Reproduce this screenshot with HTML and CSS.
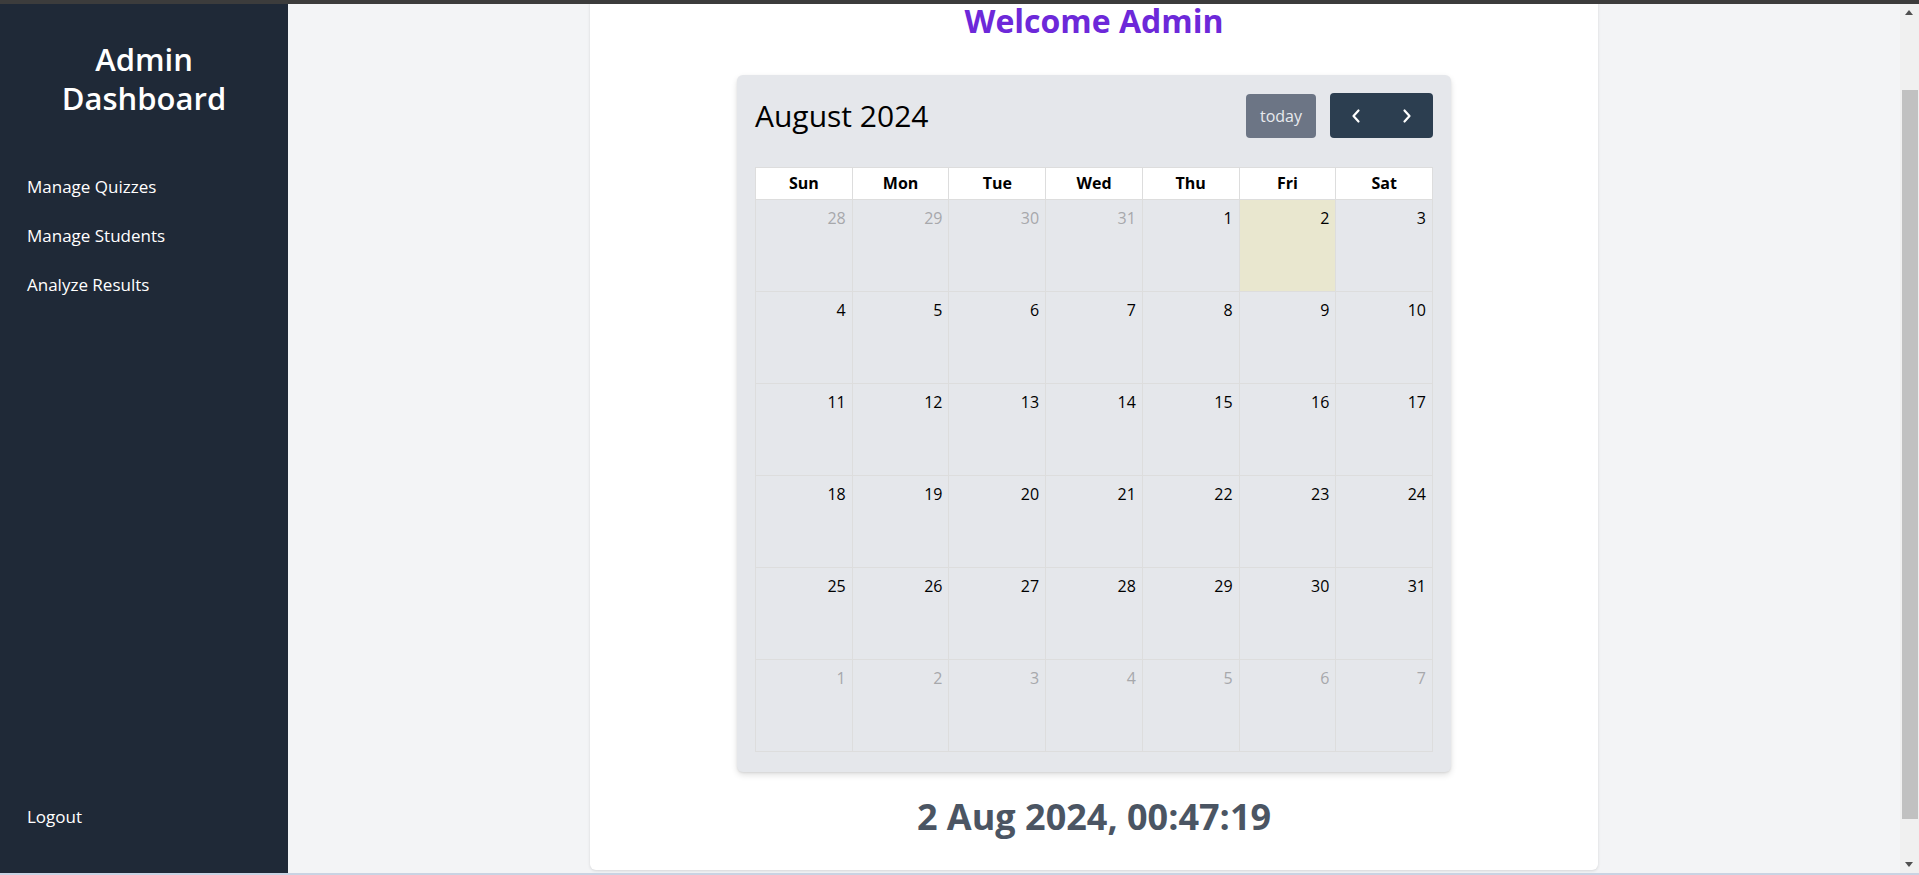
FILE: index.html
```html
<!DOCTYPE html>
<html lang="en">
<head>
<meta charset="utf-8">
<title>Admin Dashboard</title>
<link rel="stylesheet" href="styles.css">
</head>
<body>
<div class="frame-top"></div>
<div class="app">
  <aside class="sidebar">
    <h1 class="brand">Admin Dashboard</h1>
    <nav class="nav">
      <a class="nav-link" href="#">Manage Quizzes</a>
      <a class="nav-link" href="#">Manage Students</a>
      <a class="nav-link" href="#">Analyze Results</a>
    </nav>
    <a class="nav-link logout" href="#">Logout</a>
  </aside>
  <main class="main">
    <section class="card">
      <h2 class="welcome">Welcome Admin</h2>
      <div class="calendar">
        <div class="toolbar">
          <h3 class="cal-title">August 2024</h3>
          <div class="tools">
            <button class="btn btn-today">today</button>
            <div class="btn-group">
              <button class="btn btn-nav" aria-label="prev"><svg width="12" height="16" viewBox="0 0 12 16"><path d="M8.5 2.5 3.5 8l5 5.5" fill="none" stroke="#fff" stroke-width="2.2" stroke-linecap="round" stroke-linejoin="round"/></svg></button>
              <button class="btn btn-nav" aria-label="next"><svg width="12" height="16" viewBox="0 0 12 16"><path d="M3.5 2.5 8.5 8l-5 5.5" fill="none" stroke="#fff" stroke-width="2.2" stroke-linecap="round" stroke-linejoin="round"/></svg></button>
            </div>
          </div>
        </div>
        <div class="grid">
          <div class="dow">Sun</div><div class="dow">Mon</div><div class="dow">Tue</div><div class="dow">Wed</div><div class="dow">Thu</div><div class="dow">Fri</div><div class="dow">Sat</div>
          <div class="day other">28</div><div class="day other">29</div><div class="day other">30</div><div class="day other">31</div><div class="day">1</div><div class="day today">2</div><div class="day">3</div>
          <div class="day">4</div><div class="day">5</div><div class="day">6</div><div class="day">7</div><div class="day">8</div><div class="day">9</div><div class="day">10</div>
          <div class="day">11</div><div class="day">12</div><div class="day">13</div><div class="day">14</div><div class="day">15</div><div class="day">16</div><div class="day">17</div>
          <div class="day">18</div><div class="day">19</div><div class="day">20</div><div class="day">21</div><div class="day">22</div><div class="day">23</div><div class="day">24</div>
          <div class="day">25</div><div class="day">26</div><div class="day">27</div><div class="day">28</div><div class="day">29</div><div class="day">30</div><div class="day">31</div>
          <div class="day other">1</div><div class="day other">2</div><div class="day other">3</div><div class="day other">4</div><div class="day other">5</div><div class="day other">6</div><div class="day other">7</div>
        </div>
      </div>
      <p class="clock">2 Aug 2024, 00:47:19</p>
    </section>
  </main>
  <div class="scrollbar">
    <div class="sb-arrow sb-up"></div>
    <div class="sb-track"><div class="sb-thumb"></div></div>
    <div class="sb-arrow sb-down"></div>
  </div>
</div>
<div class="frame-bottom"></div>
</body>
</html>
```

FILE: styles.css
```css
* { box-sizing: border-box; }
html, body { margin: 0; padding: 0; }
body {
  width: 1919px;
  height: 875px;
  overflow: hidden;
  font-family: "Open Sans", "Noto Sans", sans-serif;
  background: #f3f4f6;
  display: flex;
  flex-direction: column;
}
.frame-top { height: 4px; background: #3c3c3c; flex: none; }
.frame-bottom { height: 2px; background: #c9d3e3; flex: none; }
.app { flex: 1; display: flex; min-height: 0; }

.sidebar {
  width: 288px;
  flex: none;
  background: #1f2937;
  color: #fff;
  display: flex;
  flex-direction: column;
  padding: 36px 0 32px;
}
.brand {
  margin: 0 0 44px;
  padding: 0 40px;
  font-size: 31px;
  line-height: 39px;
  font-weight: 600;
  text-align: center;
}
.nav { display: flex; flex-direction: column; }
.nav-link {
  display: block;
  color: #fff;
  text-decoration: none;
  font-size: 17px;
  line-height: 25px;
  padding: 12px 27px;
}
.logout { margin-top: auto; }

.main {
  flex: 1;
  min-width: 0;
  display: flex;
  flex-direction: column;
  justify-content: flex-end;
  align-items: center;
  overflow: hidden;
  padding-bottom: 3px;
}
.card {
  width: 1008px;
  flex: none;
  background: #fff;
  border-radius: 6px;
  box-shadow: 0 1px 3px rgba(0,0,0,.12);
  padding: 20px 0 33px;
  display: flex;
  flex-direction: column;
  align-items: center;
}
.welcome {
  margin: 0 0 34px;
  font-size: 32px;
  line-height: 40px;
  font-weight: 700;
  color: #6d28d9;
}
.calendar {
  width: 714px;
  background: #e5e7eb;
  border-radius: 6px;
  box-shadow: 0 3px 6px rgba(0,0,0,.12), 0 1px 2px rgba(0,0,0,.08);
  padding: 18px 18px 20px;
}
.toolbar {
  display: flex;
  align-items: center;
  justify-content: space-between;
  height: 45px;
  margin-bottom: 29px;
}
.cal-title {
  margin: 0;
  font-size: 30px;
  font-weight: 400;
  line-height: 42px;
  color: #000;
}
.tools { display: flex; align-items: center; gap: 14px; }
.btn {
  border: 0;
  font-family: inherit;
  border-radius: 4px;
  cursor: pointer;
}
.btn-today {
  width: 70px;
  height: 44px;
  background: #6c7585;
  color: #e8eaee;
  font-size: 16px;
  padding: 0;
}
.btn-group { display: flex; border-radius: 4px; overflow: hidden; }
.btn-nav {
  width: 51.5px;
  height: 45px;
  background: #2c3e50;
  border-radius: 0;
  display: flex;
  align-items: center;
  justify-content: center;
  padding: 0;
}
.grid {
  display: grid;
  grid-template-columns: repeat(7, 1fr);
  grid-template-rows: 32px repeat(6, 92px);
  border-top: 1px solid #dddddd;
  border-left: 1px solid #dddddd;
}
.dow, .day {
  border-right: 1px solid #dddddd;
  border-bottom: 1px solid #dddddd;
}
.dow {
  background: #fff;
  text-align: center;
  font-weight: 700;
  font-size: 16px;
  line-height: 30px;
  color: #000;
}
.day {
  text-align: right;
  padding: 6px 6px 4px;
  font-size: 16px;
  line-height: 24px;
  color: #000;
}
.day.other { color: #a7a8ab; }
.day.today { background: #e9e7cf; }

.clock {
  margin: 25px 0 0;
  font-size: 36px;
  line-height: 40px;
  font-weight: 700;
  color: #4b5563;
}

.scrollbar {
  width: 19px;
  flex: none;
  background: #f0f0f0;
  display: flex;
  flex-direction: column;
}
.sb-arrow { height: 17px; flex: none; position: relative; }
.sb-up::after, .sb-down::after {
  content: "";
  position: absolute;
  left: 5px;
  width: 0; height: 0;
  border-left: 4.5px solid transparent;
  border-right: 4.5px solid transparent;
}
.sb-up::after { top: 6px; border-bottom: 5px solid #505050; }
.sb-down::after { top: 6px; border-top: 5px solid #505050; }
.sb-track { flex: 1; padding: 69px 1px 37px 2px; display: flex; }
.sb-thumb { flex: 1; background: #c1c1c1; }
```
